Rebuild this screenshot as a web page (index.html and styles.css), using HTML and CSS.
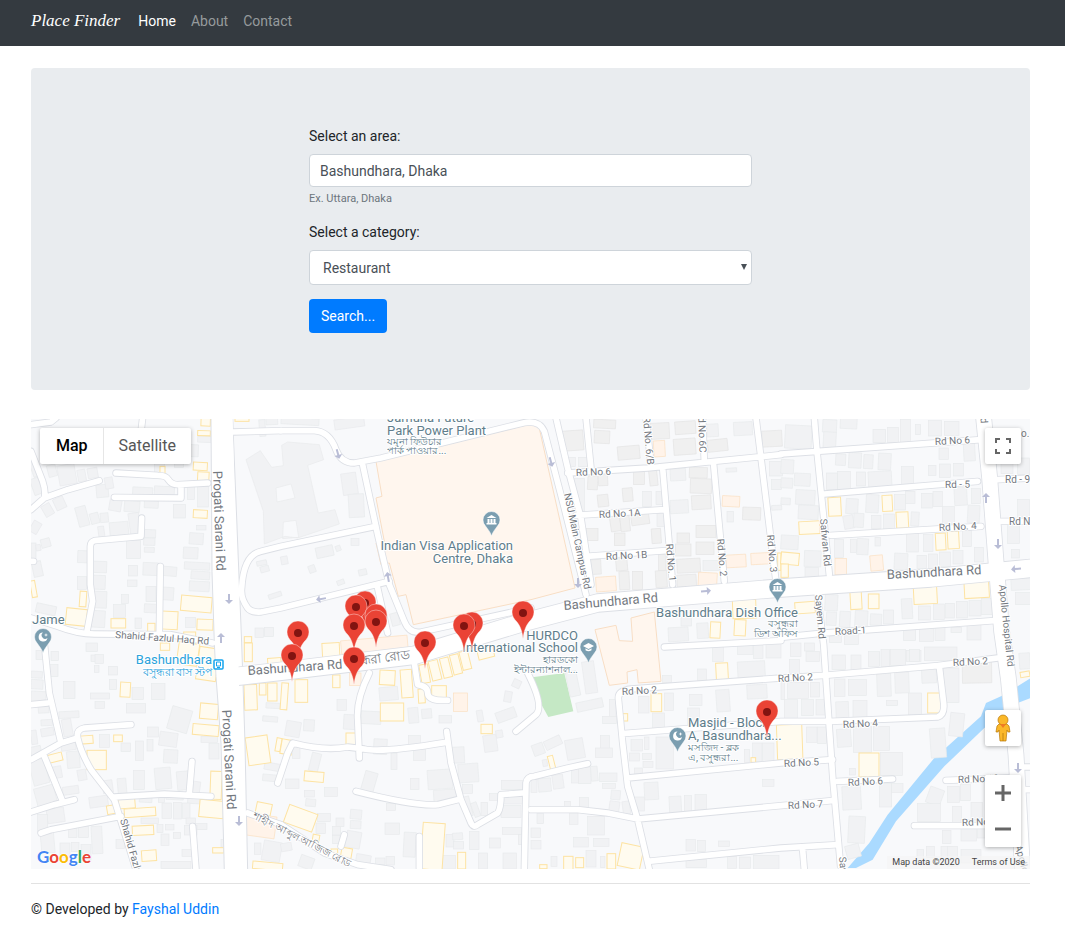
FILE: index.html
```html
<!DOCTYPE html>
<html lang="en">
<head>
<meta charset="utf-8">
<meta name="viewport" content="width=device-width, initial-scale=1">
<title>Place Finder</title>
<link rel="stylesheet" href="styles.css">
</head>
<body>
<nav class="navbar">
  <a class="brand" href="#">Place Finder</a>
  <a class="nav-link active" href="#">Home</a>
  <a class="nav-link" href="#">About</a>
  <a class="nav-link" href="#">Contact</a>
</nav>
<main class="page">
  <section class="jumbotron">
    <form class="search-form">
      <div class="form-group">
        <label for="area">Select an area:</label>
        <input class="form-control" id="area" type="text" value="Bashundhara, Dhaka" aria-describedby="area-help">
        <small class="help" id="area-help">Ex. Uttara, Dhaka</small>
      </div>
      <div class="form-group">
        <label for="category">Select a category:</label>
        <div class="select-wrap">
          <select class="form-control select" id="category"><option>Restaurant</option></select>
          <svg class="caret" viewBox="0 0 6 6" aria-hidden="true"><path d="M0 0h6L3 6z"/></svg>
        </div>
      </div>
      <button class="btn" type="button">Search...</button>
    </form>
  </section>

  <section class="map" aria-label="Map">
    <svg class="canvas" viewBox="0 0 999 450" preserveAspectRatio="xMidYMid slice">
      <defs>
        <g id="lanes">
          <path d="M0 100L35 190Q45 220 40 240L0 275M40 240L110 215 205 188M0 20L60 12 75 0M255 165L380 172Q405 172 412 185 422 200 440 200L530 195M450 200V240L250 238M332 300L330 355 190 368Q178 372 178 385L178 500 185 550 168 640M388 445L385 640M0 600L80 625Q140 648 190 648L420 650 545 675M335 0L330 40M0 430H8M605 42L750 38"/>
          <path transform="translate(750 0)" d="M0 38L100 38Q145 40 165 95 180 135 220 135L300 120 730 14Q775 6 790 40L850 270 915 530M245 140L290 350 325 500 370 610Q385 648 420 642L750 570M290 510L320 645M325 490L0 570-60 582Q-90 584-100 570-122 540-118 510-112 410-60 400L0 385 285 325"/>
          <path transform="translate(1500 0)" d="M75 0L110 150 150 300 180 500M110 165L350 150 750 110M165 0L180 150M345 0L360 140M515 0L520 130M675 0L690 120 735 490M135 292L400 275M165 415L405 398M395 150L425 500M548 140L580 490M400 687L750 668"/>
          <path transform="translate(2250 0)" d="M0 108L600 65M100 0L108 100 145 470M130 228L590 190M650 185L750 180M150 352L600 325M660 310H750M108 520L128 680 155 1075 180 1360M0 658L130 645 640 608"/>
          <path transform="translate(0 675)" d="M40 0L55 150 90 300M0 350L90 300 140 285M0 185L50 180M300 245L160 255Q135 260 140 285 150 330 180 380L250 470 315 680M250 462L400 453 540 460M475 450L483 355M40 340L95 475M130 470L70 485 0 507M270 520L60 560 30 570M485 550L495 680M650 510L750 545"/>
          <path transform="translate(750 675)" d="M265 90Q225 170 230 230L235 345M-10 420L20 330 35 300Q130 325 200 312L250 318Q300 330 495 298M497 265L510 360 540 470 570 540Q578 556 590 545L650 510Q660 495 660 455L725 450M730 680L735 420Q738 400 760 400L860 375 920 362M225 445Q400 490 470 485L530 470M400 60L410 125Q440 130 440 150 440 175 500 172M0 545L130 630 230 665 330 680M190 575L180 610M415 580V675M705 265L765 215Q790 190 740 90"/>
          <path transform="translate(1500 675)" d="M355 680L320 530 290 430 275 300 262 165Q262 142 300 138L750 105 880 97 1220 68 1400 45M275 272L750 235 900 235 1220 222Q1242 215 1238 180L1225 70M290 405L750 360 905 350M0 500L140 500 230 510 320 528 750 488 910 472M350 655L750 615 920 605M920 415L1085 408M1245 412L1440 405M1150 548H1390M815 620L820 680M1470 372H1500M1470 440H1500"/>
        </g>
        <path id="trunk" d="M620 775L750 760 1150 712 1470 615 1700 555 2250 510 2700 480 3010 450"/>
        <path id="hospital-road" d="M2858 0L2876 180 2895 430 2912 640 2932 780 2955 1010 2975 1360"/>
        <path id="progati" d="M540 0L543 460 550 675 555 775 570 975 580 1360H650L642 975 632 675 605 0z"/>
        <g id="pin">
          <path d="M0 26C-1 17-3 13-6 9-9 6-11 3-11-1A11 11 0 0 1 11-1C11 3 9 6 6 9 3 13 1 17 0 26z" fill="#ea4335" stroke="#fff" stroke-width=".4"/>
          <circle r="4" fill="#811411"/>
        </g>
        <path id="drop" d="M0 16C-1 12-4 9-6 6A8.500 8.500 0 1 1 6 6C4 9 1 12 0 16z" fill="#7b9eb0" stroke="#fff" stroke-width=".5"/>
        <g id="museum" fill="#fff"><path d="M0-5L5-2H-5zM-5 3H5V4.500H-5zM-4-1H-2V3H-4zM-1-1H1V3H-1zM2-1H4V3H2z"/></g>
        <path id="crescent" d="M0-4.500A4.500 4.500 0 1 0 4.500 1A3.500 3.500 0 0 1 0-4.500zM3-4L3.500-2.500 5-2 3.500-1.500 3 0 2.500-1.500 1-2 2.500-2.500z" fill="#fff"/>
        <path id="arrow" d="M-1-5H1V1H4L0 5-4 1H-1z" fill="#b9bdd6"/>
      </defs>

      <rect width="999" height="450" fill="#f8f9fb"/>
      <g transform="translate(0 -1) scale(.33333)">
        <path d="M1487 780L1600 765 1627 880 1552 897z" fill="#c5e8c5"/>
        <path d="M2450 1350L2515 1275 2570 1190 2710 1020 2750 985 2850 895 2865 855 2910 835 3000 780V840L2960 855 2860 930 2740 1045 2595 1210 2525 1325 2475 1350z" fill="#aadaff"/>
        <path class="building" fill-rule="evenodd" d="M645 125L688 98 722 148 757 143 752 82 770 72 865 80 878 125 830 142 862 285 912 275 925 318 800 360 762 355 700 378 697 280zM735 210L780 198 792 240 738 252zM757 312L795 307 803 358 755 362z"/>
        <path class="mall" d="M1035 130L1500 18 1522 18 1632 510 1500 545 1147 620 1125 530 1102 535 1075 435 1050 440 1035 375 1060 370 1035 240 1053 235z"/>
        <path class="mall" d="M1800 600L1870 582 1890 790 1822 795 1818 755 1788 762 1790 795 1735 802 1692 635 1755 622 1765 668 1805 670z"/>
        <g id="buildings"></g>
        <use href="#lanes" class="lane-casing"/>
        <use href="#progati" class="trunk-area"/>
        <use href="#hospital-road" class="avenue-casing"/>
        <use href="#trunk" class="trunk-casing"/>
        <use href="#lanes" class="lane-fill"/>
        <use href="#hospital-road" class="avenue-fill"/>
        <use href="#trunk" class="trunk-fill"/>
        <path d="M577 0L592 650 612 1360" stroke="#fff" stroke-width="56" fill="none"/>
      </g>
      <g>
        <use href="#arrow" x="198" y="180"/><use href="#arrow" transform="translate(190 219) rotate(180)"/>
        <use href="#arrow" transform="translate(307 35) rotate(-15)"/><use href="#arrow" transform="translate(357 158) rotate(170)"/>
        <use href="#arrow" transform="translate(290 180) rotate(80)"/><use href="#arrow" transform="translate(520 43) rotate(-15)"/>
        <use href="#arrow" x="547" y="164"/><use href="#arrow" transform="translate(675 172) rotate(-95)"/>
        <use href="#arrow" transform="translate(955 79) rotate(180)"/><use href="#arrow" x="967" y="125"/>
        <use href="#arrow" transform="translate(985 150) rotate(85)"/><use href="#arrow" x="208" y="402"/><use href="#arrow" x="987" y="349"/>
      </g>

      <g class="road">
        <text transform="translate(182 52) rotate(88)" class="large">Progati Sarani Rd</text>
        <text transform="translate(191 291) rotate(87)" class="large">Progati Sarani Rd</text>
        <text transform="translate(84 219) rotate(4)">Shahid Fazlul Haq Rd</text>
        <text transform="translate(89 401) rotate(74)">Shahid Fazlul Haq Rd</text>
        <text transform="translate(217 256) rotate(-4)" class="large">Bashundhara Rd</text>
        <text transform="translate(330 246) rotate(-7)" class="large bn">ন্ধরা রোড</text>
        <text transform="translate(533 191) rotate(-5)" class="large">Bashundhara Rd</text>
        <text transform="translate(856 160) rotate(-3)" class="large">Bashundhara Rd</text>
        <text transform="translate(221 399) rotate(27)" class="bn">শাহীদ আব্দুল আজিজ রোড</text>
        <text transform="translate(545 57) rotate(-2)">Rd No 6</text>
        <text transform="translate(568 99) rotate(-3)">Rd No 1A</text>
        <text transform="translate(575 141) rotate(-3)">Rd No 1B</text>
        <text transform="translate(533 75) rotate(78)">NSU Main Campus Rd</text>
        <text transform="translate(612 -2) rotate(85)">Rd No. 6/B</text>
        <text transform="translate(667 -8) rotate(88)">Rd No 6C</text>
        <text transform="translate(635 125) rotate(85)">Rd No. 1</text>
        <text transform="translate(686 120) rotate(85)">Rd No. 2</text>
        <text transform="translate(736 116) rotate(85)">Rd No. 3</text>
        <text transform="translate(789 100) rotate(85)">Safwan Rd</text>
        <text transform="translate(784 176) rotate(85)">Sayem Rd</text>
        <text transform="translate(904 26) rotate(-3)">Rd No 6</text>
        <text transform="translate(914 69) rotate(-1)">Rd - 5</text>
        <text transform="translate(974 64)">Rd - 9</text>
        <text transform="translate(978 106)">Rd No 3</text>
        <text transform="translate(990 18)">o. 9</text>
        <text transform="translate(947 -47) rotate(87)">Hospital Rd</text>
        <text transform="translate(908 112) rotate(-3)">Rd No. 4</text>
        <text transform="translate(804 216) rotate(-3)">Road-1</text>
        <text transform="translate(968 166) rotate(84)">Apollo Hospital Rd</text>
        <text transform="translate(922 247) rotate(-3)">Rd No 2</text>
        <text transform="translate(747 263) rotate(-3)">Rd No 2</text>
        <text transform="translate(591 276) rotate(-3)">Rd No 2</text>
        <text transform="translate(812 309) rotate(-3)">Rd No 4</text>
        <text transform="translate(753 348) rotate(-3)">Rd No 5</text>
        <text transform="translate(817 367) rotate(-3)">Rd No 6</text>
        <text transform="translate(757 390) rotate(-3)">Rd No 7</text>
        <text transform="translate(927 364) rotate(-2)">Rd No 10</text>
        <text transform="translate(931 407) rotate(-2)">Rd No 11</text>
        <text transform="translate(808 438) rotate(85)">Sayem</text>
        <text transform="translate(984 427) rotate(75)">Apollo</text>
      </g>
      <g class="poi">
        <text x="356" y="3">Jamuna Future</text><text x="356" y="16">Park Power Plant</text>
        <text x="356" y="26" class="bn">যমুনা ফিউচার</text><text x="356" y="35" class="bn">পার্ক পাওয়ার...</text>
        <text x="482" y="131" class="end">Indian Visa Application</text><text x="482" y="144" class="end">Centre, Dhaka</text>
        <text x="547" y="221" class="end">HURDCO</text><text x="547" y="233" class="end">International School</text>
        <text x="547" y="244" class="bn end">হারডকো</text><text x="547" y="254" class="bn end">ইন্টারন্যাশনাল...</text>
        <text x="767" y="198" class="end">Bashundhara Dish Office</text>
        <text x="767" y="208" class="bn end">বসুন্ধরা</text><text x="767" y="218" class="bn end">ডিশ অফিস</text>
        <text x="657" y="308">Masjid - Block</text><text x="657" y="321">A, Basundhara...</text>
        <text x="657" y="332" class="bn">মসজিদ - ব্লক</text><text x="657" y="342" class="bn">এ, বসুন্ধরা...</text>
        <text x="1" y="205">Jame</text>
      </g>
      <g class="poi transit"><text x="181" y="245" class="end">Bashundhara</text><text x="181" y="257" class="bn end">বসুন্ধরা বাস স্টপ</text></g>
      <rect x="183" y="241" width="9" height="9" rx="1" fill="#fff" stroke="#16a5ee" stroke-width="1.500"/><path d="M185.500 243H189.500V247H185.500zM186 248.500H189" fill="none" stroke="#16a5ee"/>
      <g transform="translate(460.500 101)"><use href="#drop"/><use href="#museum"/></g>
      <g transform="translate(746.500 168)"><use href="#drop"/><use href="#museum"/></g>
      <g transform="translate(646.500 317)"><use href="#drop"/><use href="#crescent"/></g>
      <g transform="translate(12 218)"><use href="#drop"/><use href="#crescent"/></g>
      <g transform="translate(557.500 228)"><use href="#drop"/><path d="M-5.500-1L0-4 5.500-1 0 2zM-3 1.200V3.200Q0 5.500 3 3.200V1.200L0 3z" fill="#fff"/></g>

      <g>
        <use href="#pin" x="334" y="184"/><use href="#pin" x="325" y="188"/><use href="#pin" x="345" y="197"/>
        <use href="#pin" x="345" y="203"/><use href="#pin" x="323" y="207"/><use href="#pin" x="267" y="214"/>
        <use href="#pin" x="441" y="205"/><use href="#pin" x="433" y="207"/><use href="#pin" x="492" y="194"/>
        <use href="#pin" x="394" y="224"/><use href="#pin" x="261" y="237"/><use href="#pin" x="323" y="240"/><use href="#pin" x="736" y="293"/>
      </g>
    </svg>

    <div class="map-types">
      <button class="type current" type="button">Map</button>
      <button class="type" type="button">Satellite</button>
    </div>
    <button class="tool fullscreen" type="button" aria-label="Toggle fullscreen view">
      <svg width="18" height="18" viewBox="0 0 18 18"><path d="M2 6V2H6M12 2H16V6M16 12V16H12M6 16H2V12" fill="none" stroke="#666" stroke-width="2"/></svg>
    </button>
    <div class="map-tools">
      <button class="tool" type="button" aria-label="Street View">
        <svg width="18" height="28" viewBox="0 0 18 28"><path d="M5 10H13L15 12 16 18H14L13 16 12 27H6L5 16 4 18H2L3 12z" fill="#fbb829" stroke="#b8790c" stroke-width=".7"/><circle cx="9" cy="6" r="5" fill="#fbb829" stroke="#b8790c" stroke-width=".7"/><path d="M6 10H12L9 14z" fill="#ef7b24"/><path d="M9 19V27" stroke="#b8790c" stroke-width=".8"/></svg>
      </button>
      <div class="zoom">
        <button class="tool" type="button" aria-label="Zoom in"><svg width="18" height="18" viewBox="0 0 18 18"><path d="M1 9H17M9 1V17" stroke="#666" stroke-width="3"/></svg></button>
        <button class="tool" type="button" aria-label="Zoom out"><svg width="18" height="18" viewBox="0 0 18 18"><path d="M1 9H17" stroke="#666" stroke-width="3"/></svg></button>
      </div>
    </div>
    <a class="google" href="#" aria-label="Google"><span class="b">G</span><span class="r">o</span><span class="y">o</span><span class="b">g</span><span class="g">l</span><span class="r">e</span></a>
    <div class="credits"><span>Map data ©2020</span><a href="#">Terms of Use</a></div>
  </section>

  <footer class="footer">© Developed by <a href="#">Fayshal Uddin</a></footer>
</main>
<script src="map.js"></script>
</body>
</html>
```
FILE: styles.css
```css
* { box-sizing: border-box; }
body { margin: 0; background: #fff; color: #212529; font: 14px/22px Roboto, "Liberation Sans", sans-serif; }
a { color: #007bff; text-decoration: none; }
input, select, button { font: inherit; }

.navbar { display: flex; align-items: center; gap: 15px; height: 46px; padding: 0 31px 4px; background: #343a40; }
.brand { margin-right: 3px; color: #fff; font: italic 17px/22px "Liberation Serif", serif; }
.nav-link { color: #969a9d; }
.nav-link.active { color: #fff; }

.page { padding: 22px 35px 14px 31px; }
.jumbotron { padding: 57px 28px; border-radius: 4px; background: #e9ecef; }
.search-form { max-width: 443px; margin: 0 auto; }
.form-group { margin-bottom: 14px; }
.form-group label { display: block; margin-bottom: 7px; }
.form-control { display: block; width: 100%; height: 33px; padding: 0 10px; border: 1px solid #ced4da; border-radius: 4px; background: #fff; color: #495057; }
.select { height: 35px; padding: 0 13px; appearance: none; }
.select-wrap { position: relative; }
.caret { position: absolute; top: 14px; right: 5px; width: 6px; height: 6px; fill: #495057; pointer-events: none; }
.help { display: block; margin-top: 4px; color: #6c757d; font-size: 11px; line-height: 16px; }
.btn { display: block; height: 34px; padding: 0 12px; border: 0; border-radius: 4px; background: #007bff; color: #fff; }

.map { position: relative; height: 450px; margin-top: 29px; overflow: hidden; background: #f8f9fb; }
.canvas { display: block; width: 100%; height: 100%; }
.building { fill: #f1f2f4; stroke: #e8eaec; stroke-width: 2; }
.tan { fill: #f0f0f0; stroke: #e4e4e4; stroke-width: 2; }
.shop { fill: #fffbef; stroke: #fde3a3; stroke-width: 3; }
.orange { fill: #fff3e9; stroke: #fbdfc0; stroke-width: 2; }
.mall { fill: #fff6ee; stroke: #f8dec5; stroke-width: 3; }
.lane-casing, .lane-fill, .trunk-casing, .trunk-fill, .avenue-casing, .avenue-fill { fill: none; stroke-linecap: round; stroke-linejoin: round; }
.lane-casing { stroke: #dcdfe5; stroke-width: 22; }
.lane-fill { stroke: #fff; stroke-width: 17; }
.trunk-area { fill: #fff; stroke: #dcdfe5; stroke-width: 3; }
.trunk-casing { stroke: #dcdfe5; stroke-width: 58; }
.trunk-fill { stroke: #fff; stroke-width: 53; }
.avenue-casing { stroke: #dcdfe5; stroke-width: 50; }
.avenue-fill { stroke: #fff; stroke-width: 45; }

.canvas text { font-family: Roboto, "Noto Sans", sans-serif; paint-order: stroke; stroke: #fff; stroke-width: 2px; stroke-linejoin: round; }
.road text { fill: #74797f; font-size: 10px; }
.canvas .large { font-size: 13px; }
.poi text { fill: #607d8b; font-size: 13px; }
.poi .bn { font-size: 10px; }
.transit text { fill: #2ba3dc; }
.transit .bn { font-size: 11px; }
.canvas .end { text-anchor: end; }

.map-types { position: absolute; top: 9px; left: 9px; display: flex; border-radius: 2px; background: #fff; box-shadow: 0 1px 4px rgba(0, 0, 0, .3); }
.type { height: 36px; padding: 0 15px; border: 0; border-left: 1px solid #e6e6e6; background: none; color: #565656; font-size: 16px; }
.type.current { border-left-color: transparent; color: #000; font-weight: 500; }
.tool { display: flex; align-items: center; justify-content: center; width: 36px; height: 36px; padding: 0; border: 0; border-radius: 2px; background: #fff; box-shadow: 0 1px 4px rgba(0, 0, 0, .3); }
.fullscreen { position: absolute; top: 9px; right: 9px; }
.map-tools { position: absolute; right: 9px; bottom: 22px; display: flex; flex-direction: column; gap: 29px; }
.zoom { border-radius: 2px; background: #fff; box-shadow: 0 1px 4px rgba(0, 0, 0, .3); }
.zoom .tool { box-shadow: none; }
.google { position: absolute; bottom: 0; left: 6px; font: 700 17px/24px Lato, sans-serif; text-shadow: 0 0 2px #fff, 0 0 2px #fff; }
.b { color: #4285f4; }
.r { color: #ea4335; }
.y { color: #fbbc05; }
.g { color: #34a853; }
.credits { position: absolute; right: 0; bottom: 0; display: flex; gap: 12px; padding: 0 5px; background: rgba(245, 245, 245, .7); color: #444; font-size: 9px; line-height: 13px; }
.credits a { color: #444; }

.footer { margin-top: 14px; padding-top: 14px; border-top: 1px solid #e2e2e2; }
```
FILE: map.js
```js
// Building footprints: x, y, width, height and an optional tilt in degrees.
// Each row is relative to one tile of the street map.
const footprints = [
  { kind: "building", dx: 0, dy: 0, list: "0,125,28,50,-20 3,180,26,50,-20 50,140,26,36,-15 82,140,52,60,-10 140,155,24,35,-10 170,150,30,30,-10 196,200,36,38,-5 70,238,32,36,-25 36,258,28,36,-30 0,310,26,36,30 138,265,32,60,-15 178,285,26,32,-15 208,285,24,28,-5 235,245,36,34,10 280,248,46,34,5 236,312,56,40,-5 295,285,32,66,-8 202,325,18,35,-8 222,178,24,34,-10 305,208,60,26,3 370,205,60,32,3 340,248,42,22,3 427,260,36,40,0 470,80,32,36,2 500,55,40,18,2 430,118,28,30,0 370,135,30,28,0 140,398,30,36,2 185,430,42,34,2 185,472,38,42,2 139,476,28,38,0 187,520,40,50,2 182,578,40,50,3 287,368,42,54,0 340,335,34,24,2 338,360,34,22,2 340,388,30,15,2 336,434,46,38,2 395,446,42,28,5 392,508,36,38,4 345,505,30,46,0 340,558,36,26,3 292,442,28,32,0 290,486,28,20,0 272,530,20,26,0 248,560,36,38,0 312,600,20,32,0 475,345,42,34,4 457,388,44,34,3 497,322,28,14,0 460,433,76,22,3 480,460,56,24,4 475,490,60,30,3 464,598,30,30,0 500,205,32,62,0 470,206,20,38,0 15,560,60,28,12 5,430,28,46,-12 30,362,28,26,-15 0,375,15,46,0 15,380,14,18,-10 685,5,18,50,-4 705,0,35,20,-3 677,428,30,14,-12 688,444,26,18,-15 712,525,40,14,-18 672,630,25,28,0 700,628,28,28,0 400,70,30,26,0" },
  { kind: "building", dx: 750, dy: 0, list: "183,165,45,65,-8 203,228,46,70,-3 0,415,20,24,-10 83,442,20,22,-20 105,385,52,32,-12 164,383,15,16,-20 210,362,24,20,0 233,454,24,18,-12 168,486,22,14,-20 330,585,24,38,-15 160,0,90,30,-8 0,0,114,20,3" },
  { kind: "tan", dx: 1500, dy: 0, list: "85,38,72,60,-4 188,5,66,26,3 190,38,46,38,3 260,84,66,40,-5 355,15,60,48,-3 432,10,62,38,-4 428,62,66,48,-4 530,64,60,36,-6 308,150,32,50,0 355,155,24,48,-6 170,175,30,40,3 202,165,28,38,-3 475,148,54,32,2 478,182,64,44,2 482,232,58,42,-3 275,210,30,40,-5 200,230,32,36,-6 238,292,30,48,-8 268,285,28,55,-6 300,278,54,42,-8 167,332,34,36,0 250,345,32,38,0 362,332,28,44,-4 495,322,60,36,0 495,372,54,38,0 438,345,38,30,0 434,378,46,36,0 170,425,40,44,-3 255,420,34,38,-5 265,460,30,55,-3 305,460,30,54,0 374,458,34,50,-3 383,410,22,48,0 438,422,70,42,-3 438,470,58,36,-3 635,268,54,38,2 693,38,60,48,-3" },
  { kind: "building", dx: 1500, dy: 0, list: "105,118,28,28,0 143,118,26,28,0 125,182,36,98,0 335,220,26,46,0 375,220,24,40,0 418,152,46,36,-3 418,246,54,40,-3 378,285,26,40,0 528,18,34,38,-3 608,12,56,40,-3 585,150,32,12,-3 588,280,20,32,0 516,428,52,30,0 715,130,40,44,0 722,185,30,30,0 722,262,30,14,-3 412,628,60,42,-3 498,615,34,46,-3 450,598,32,26,0" },
  { kind: "building", dx: 2250, dy: 0, list: "12,22,80,70,3 125,5,42,38,3 127,42,38,52,3 178,0,50,32,3 276,34,38,40,0 320,28,32,46,0 358,5,30,68,0 404,20,15,30,0 442,8,40,46,0 490,10,44,42,0 164,108,30,34,3 203,104,38,46,3 248,110,28,42,3 292,106,38,50,3 136,165,34,50,0 170,160,38,55,0 226,162,28,42,0 262,160,70,50,-3 362,146,36,56,0 443,142,22,30,0 475,138,34,40,0 474,90,28,34,0 518,136,30,38,0 548,75,34,54,-3 0,125,38,42,3 0,180,35,30,3 40,166,48,38,3 44,216,58,44,3 52,262,60,42,3 0,240,28,20,3 195,242,36,45,3 188,292,30,40,-10 218,286,30,42,3 255,230,38,54,3 272,292,28,40,0 308,288,32,45,0 340,230,34,46,0 374,220,28,36,0 422,226,32,44,0 456,220,28,46,0 520,208,38,54,-3 572,212,26,44,0 484,266,36,50,0 560,262,36,52,3 390,282,24,42,3 0,352,52,42,3 70,398,50,48,2 72,448,40,34,0 160,365,28,54,0 208,365,18,38,0 228,362,34,48,3 282,358,16,26,0 340,406,40,50,3 376,346,36,56,0 428,350,28,50,0 544,338,28,48,0 408,412,28,40,0 442,408,28,44,0 476,402,32,44,0 516,398,30,40,0 580,388,28,44,0 132,530,38,48,3 136,582,30,40,3 176,580,32,48,3 222,578,38,50,3 268,588,34,34,3 308,576,30,42,0 362,542,32,60,-3 412,564,36,42,0 458,558,32,46,0 494,556,26,44,0 526,550,34,50,0 564,548,36,46,0 602,542,36,48,0 145,650,36,24,0 190,640,42,40,0 368,626,36,42,0 415,620,42,50,0 462,622,30,46,0 510,628,32,16,0 558,620,42,46,0 680,320,36,56,0 692,394,24,26,0 710,245,36,50,0 690,470,60,46,-3 703,524,45,36,0 660,125,36,42,0 710,120,35,50,0" },
  { kind: "building", dx: 0, dy: 675, list: "15,22,26,28,0 0,85,34,20,3 0,110,36,28,3 0,145,45,30,3 55,65,26,36,0 60,25,22,28,0 98,115,34,52,0 84,205,60,20,-3 22,190,32,20,-3 30,230,34,18,-3 30,255,38,24,-10 0,262,18,42,-8 0,310,32,40,-12 95,228,28,52,-10 90,292,44,30,-8 108,325,38,50,-5 140,380,26,32,-10 0,350,48,75,-15 14,430,60,60,-15 66,370,26,35,-10 95,430,48,24,-8 48,495,52,44,-8 20,515,30,50,0 30,570,40,60,-5 180,36,24,20,0 190,68,14,20,0 192,35,25,26,0 178,150,58,18,0 192,176,28,20,0 232,70,28,26,0 235,110,22,30,0 286,182,58,28,0 303,134,34,36,0 362,122,40,48,0 165,0,34,26,0 415,195,62,70,16 205,275,30,38,0 270,300,28,26,0 313,294,24,58,0 350,252,32,30,0 348,290,18,34,0 385,268,54,42,8 398,320,42,40,3 372,374,48,64,-5 260,406,26,46,-5 308,382,32,58,0 215,412,30,38,-8 438,385,36,56,-5 475,415,32,38,8 175,460,56,32,-8 510,280,50,18,0 534,302,30,46,0 325,458,38,20,3 382,452,18,26,0 405,452,52,18,3 470,462,48,20,3 393,480,28,46,0 427,478,24,50,0 455,480,22,46,0 330,525,52,16,0 378,545,18,24,0 403,545,26,16,0 390,573,24,34,0 427,568,22,18,0 465,525,28,18,0 490,542,38,18,0 460,548,38,28,0 453,620,32,20,0 113,556,25,28,0 142,550,30,34,0 182,550,32,82,-3 87,600,30,44,0 122,598,22,28,0 150,605,30,46,0 255,590,26,26,0 390,655,90,22,0 570,590,18,22,0 705,180,42,16,3 695,220,45,16,5 700,360,45,22,10 695,395,50,20,5 695,595,55,60,10 670,600,20,34,0" },
  { kind: "building", dx: 750, dy: 675, list: "14,235,44,46,10 68,230,32,34,3 35,312,22,34,0 88,330,28,55,14 14,408,40,28,0 70,442,30,20,0 74,468,30,22,5 131,434,38,26,0 110,512,38,24,0 105,540,28,32,0 168,170,28,32,0 188,215,38,44,3 240,205,60,38,3 295,132,56,40,-5 382,194,30,46,-5 422,198,30,28,-5 474,218,38,22,0 278,288,40,46,3 382,278,36,34,0 398,318,36,34,0 330,332,18,48,0 246,386,38,60,16 388,406,26,34,0 440,380,74,58,-4 458,440,68,36,-4 514,312,36,48,-3 532,362,60,56,-4 545,425,30,26,0 552,460,18,60,-14 575,478,18,44,-20 600,478,20,40,0 625,452,28,20,0 645,200,60,32,-20 588,202,18,34,-10 608,276,40,50,-8 645,262,20,22,-10 208,500,34,28,5 208,533,32,24,3 195,565,44,50,10 165,525,24,26,0 155,550,24,26,0 155,578,22,24,0 312,540,44,34,0 316,482,28,20,0 368,568,36,74,3 225,635,44,28,10 284,645,28,20,0 315,640,26,26,0 55,640,42,36,20 0,600,32,24,-10 465,638,58,40,0 495,574,24,38,0 515,570,30,20,-4 518,596,30,22,0 566,566,28,54,0 592,630,28,48,0 626,585,32,30,0 666,630,40,48,0 662,412,64,28,0 666,455,60,28,0 660,488,60,36,0 664,554,58,20,0 712,575,22,30,0 670,145,22,32,10 695,110,24,24,25" },
  { kind: "building", dx: 1500, dy: 675, list: "110,85,32,75,-12 158,55,36,96,-8 136,172,80,28,-12 235,170,20,60,0 215,220,42,22,0 40,285,52,28,-25 5,302,34,34,-20 105,288,54,60,-10 208,278,28,40,0 193,315,52,28,0 35,350,14,20,-10 65,395,32,42,-8 22,406,38,40,-5 0,410,18,38,0 122,372,20,48,0 142,372,38,50,0 180,370,20,44,-5 206,390,52,26,0 215,422,38,14,0 240,442,28,28,5 235,475,30,32,8 275,475,22,38,-8 145,464,28,30,0 100,475,18,18,0 18,512,20,30,0 115,510,26,34,0 170,520,50,56,0 128,584,44,28,0 188,586,46,24,0 165,622,30,50,0 0,555,28,28,0 0,592,30,26,0 60,640,18,30,0 208,640,14,34,0 322,160,32,50,0 365,210,36,48,0 400,150,28,52,0 475,154,38,34,0 556,140,40,66,-4 470,195,36,60,0 500,78,26,34,0 395,98,26,20,0 545,5,32,50,0 620,55,82,52,-3 648,125,60,42,-3 620,0,46,34,0 668,0,28,46,0 705,0,45,45,0 375,282,52,96,0 340,282,14,38,0 300,290,34,34,0 295,330,30,24,0 335,332,26,18,0 336,355,30,18,0 310,375,24,18,0 340,418,42,52,-3 310,462,30,42,0 415,460,36,52,-3 460,458,22,48,0 492,455,34,48,0 695,410,34,20,0 640,320,16,38,0 665,300,28,56,0 695,300,34,55,0 465,590,28,34,0 500,592,24,34,0 562,594,34,16,0 590,640,26,36,0 625,642,34,34,0 668,638,76,40,0 465,650,62,24,0" },
  { kind: "building", dx: 2250, dy: 675, list: "28,0,32,40,0 70,0,30,24,0 75,25,40,30,0 25,50,30,50,0 0,110,10,60,0 20,118,62,48,0 88,118,28,44,0 10,170,40,56,0 62,170,36,48,0 105,170,30,46,0 153,36,40,44,0 210,36,30,48,0 262,26,34,44,0 300,20,26,50,0 328,20,46,48,0 376,22,44,34,0 386,20,30,36,0 430,12,98,40,0 160,108,32,52,0 202,110,54,48,0 288,92,42,68,-2 342,88,42,62,-2 422,62,44,58,-2 382,150,40,66,0 316,172,34,16,0 165,176,38,62,-2 216,172,42,60,0 486,75,48,104,0 76,252,32,46,0 110,252,26,50,0 168,258,42,54,-4 218,250,54,78,0 278,250,48,72,0 298,328,66,70,0 205,376,18,20,0 448,256,46,88,-4 506,210,42,70,6 184,430,56,70,-3 296,422,36,70,0 332,422,34,26,0 202,520,50,80,3 195,605,42,40,-15 440,435,44,50,20 410,482,68,54,0 500,430,36,48,0 538,425,30,48,0 514,490,28,50,0 570,478,34,52,0 484,562,26,40,0 540,530,46,64,0 590,535,26,50,0 436,610,24,34,0 480,610,34,50,0 408,620,20,26,0 500,610,30,60,0 540,620,60,40,0 715,30,32,48,-4" },
  { kind: "tan", dx: 2250, dy: 675, list: "544,52,88,68,-1" },
  { kind: "shop", dx: 0, dy: 0, list: "510,0,28,24,2 500,38,38,15,2 487,133,42,24,3 500,162,34,26,3 387,145,15,24,0 487,276,42,24,3 146,520,20,46,4 105,572,62,50,6 0,488,15,50,-10 450,535,92,46,5 390,580,50,54,3 240,602,44,28,0 350,616,22,30,0 458,642,36,28,0 498,604,48,32,2 612,0,42,10,0 640,656,22,18,0" },
  { kind: "orange", dx: 1500, dy: 0, list: "368,68,34,48,-3 574,234,52,32,3 195,476,60,44,-4 502,464,56,40,3 585,410,60,38,-3 660,405,54,34,-3" },
  { kind: "shop", dx: 1500, dy: 0, list: "605,545,70,56,-2 538,612,30,48,3 610,605,34,48,3 740,405,10,52,0" },
  { kind: "shop", dx: 2250, dy: 0, list: "142,238,38,56,-3 304,232,30,48,-3 346,282,36,48,-3 54,310,62,38,-3 0,404,54,36,5 0,438,22,40,0 464,346,30,50,-3 500,340,34,52,-3 208,518,34,56,-3 262,528,32,44,0 398,502,70,56,-3 550,486,74,54,-3 42,552,60,34,-4" },
  { kind: "orange", dx: 2250, dy: 0, list: "162,422,34,48,0 268,412,38,46,-5" },
  { kind: "shop", dx: 0, dy: 675, list: "388,0,28,22,0 440,0,62,66,8 500,14,60,98,8 268,118,30,44,3 507,182,54,46,5 485,245,78,32,5 248,276,26,20,0 148,278,38,24,-4 168,322,58,58,0 50,332,44,24,-14 262,462,50,34,-5 228,487,26,26,-10 280,495,94,26,-4 304,548,64,28,-3 332,622,44,32,-4 505,472,74,52,5 538,385,34,84,2 545,614,34,16,0 640,125,38,76,-2 685,120,20,36,0 710,120,28,54,0 648,280,66,84,-8 640,0,24,56,0 710,45,40,18,-4 735,285,15,40,10 675,480,46,36,12 665,658,90,22,5" },
  { kind: "shop", dx: 750, dy: 675, list: "0,120,20,80,4 42,110,38,68,0 155,96,22,38,0 296,82,46,44,3 360,80,34,84,-4 412,138,20,42,-3 452,128,44,40,0 418,64,26,56,-10 448,52,28,60,-14 482,44,26,60,-14 512,34,26,60,-14 540,24,26,56,-14 590,14,48,32,-14 298,180,70,54,0 195,270,44,40,0 0,290,34,44,10 70,386,58,30,5 14,498,90,56,20 600,244,34,28,0 124,0,52,55,-3 422,540,66,140,4 530,628,24,50,0 180,615,32,34,10 150,618,20,18,0 95,575,20,20,10" },
  { kind: "orange", dx: 750, dy: 675, list: "517,150,42,55,0 206,90,34,38,0 180,-15,200,40,-5" },
  { kind: "shop", dx: 1500, dy: 675, list: "555,60,36,50,-3 360,152,32,54,0 274,212,16,22,0 54,338,16,44,-14 660,344,14,14,0 265,605,68,70,12 228,632,26,46,0 98,640,28,40,0 134,644,24,30,0 26,665,22,12,0" },
  { kind: "shop", dx: 2250, dy: 675, list: "-12,245,76,104,-2 440,150,42,60,0 234,330,60,72,0 718,86,28,16,-10" },
  { kind: "orange", dx: 0, dy: 675, list: "634,515,100,66,8" }
];
const layer = document.getElementById("buildings");
for (const { kind, dx, dy, list } of footprints) {
  for (const item of list.split(" ")) {
    const [x, y, w, h, tilt] = item.split(",").map(Number);
    const shape = document.createElementNS("http://www.w3.org/2000/svg", "rect");
    shape.setAttribute("class", kind);
    shape.setAttribute("x", x + dx);
    shape.setAttribute("y", y + dy);
    shape.setAttribute("width", w);
    shape.setAttribute("height", h);
    shape.setAttribute("transform", `rotate(${tilt || 0} ${x + dx + w / 2} ${y + dy + h / 2})`);
    layer.append(shape);
  }
}
```
